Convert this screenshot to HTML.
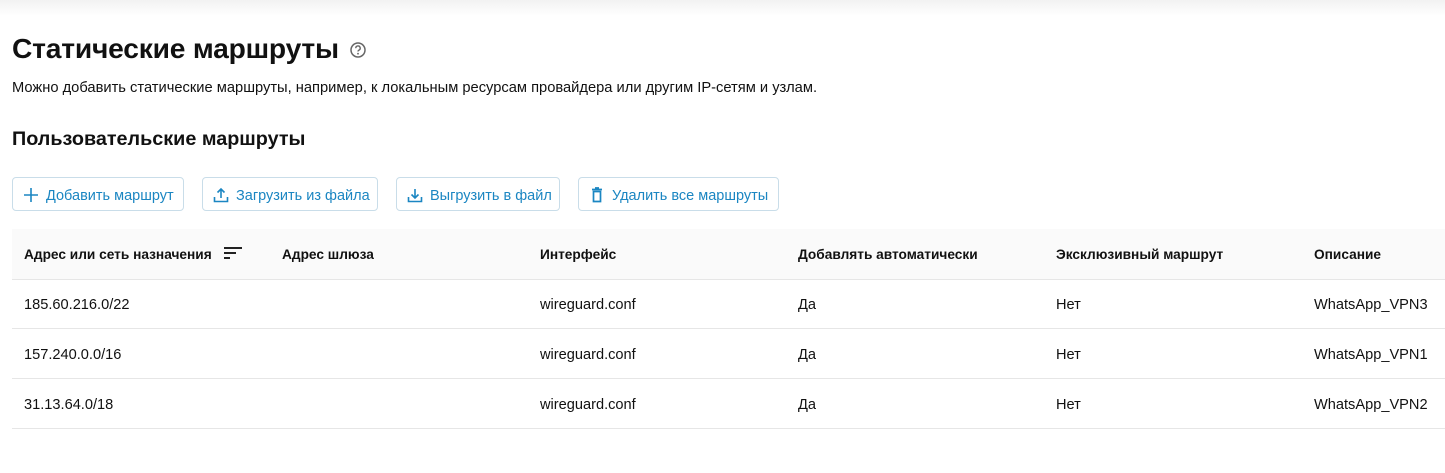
<!DOCTYPE html>
<html><head><meta charset="utf-8"><style>
body{margin:0;width:1445px;height:473px;background:#fff;font-family:"Liberation Sans",sans-serif;color:#111;position:relative;overflow:hidden}
.top{position:absolute;left:0;top:0;width:1445px;height:16px;background:linear-gradient(#f2f2f2,#fff)}
.a{position:absolute;white-space:nowrap}
h1{position:absolute;left:12px;top:32px;margin:0;font-size:28.2px;font-weight:bold;letter-spacing:-0.2px}
.btn{position:absolute;top:177px;height:32px;border:1px solid #c9dde9;border-radius:4px;color:#1b86c2;font-size:14.5px;line-height:36px;box-sizing:content-box;white-space:nowrap}
.btn svg{position:absolute;left:10px;top:9px}
.btn span{position:absolute;left:33px}
.th{position:absolute;left:12px;top:229px;width:1433px;height:50px;background:#fafafa;border-bottom:1px solid #e6e6e6}
.row{position:absolute;left:12px;width:1433px;height:49px;border-bottom:1px solid #e6e6e6}
.c{position:absolute;font-size:14.6px;top:0;line-height:52px;white-space:nowrap}
.hd{font-weight:bold;font-size:13.7px}
</style></head><body>
<div class="top"></div>
<h1>Статические маршруты</h1>
<svg class="a" style="left:349px;top:41px" width="18" height="18" viewBox="0 0 18 18"><circle cx="9" cy="9" r="7" fill="none" stroke="#666" stroke-width="1.5"/><path d="M6.8 7.2a2.2 2.2 0 1 1 3 2c-.6.3-.8.7-.8 1.3" fill="none" stroke="#666" stroke-width="1.4"/><circle cx="9" cy="12.7" r=".9" fill="#666"/></svg>
<div class="a" style="left:12px;top:80px;font-size:14.7px">Можно добавить статические маршруты, например, к локальным ресурсам провайдера или другим IP-сетям и узлам.</div>
<div class="a" style="left:12px;top:128px;font-size:19.8px;font-weight:bold">Пользовательские маршруты</div>

<div class="btn" style="left:12px;width:170px"><svg width="16" height="16" viewBox="0 0 16 16"><path d="M8 1v14M1 8h14" stroke="#1b86c2" stroke-width="1.6"/></svg><span>Добавить маршрут</span></div>
<div class="btn" style="left:202px;width:174px"><svg width="16" height="16" viewBox="0 0 16 16"><path d="M8 11V2M4.5 5.5L8 2l3.5 3.5M1.5 10v4.5h13V10" fill="none" stroke="#1b86c2" stroke-width="1.6"/></svg><span>Загрузить из файла</span></div>
<div class="btn" style="left:396px;width:162px"><svg width="16" height="16" viewBox="0 0 16 16"><path d="M8 2v9M4.5 7.5L8 11l3.5-3.5M1.5 10v4.5h13V10" fill="none" stroke="#1b86c2" stroke-width="1.6"/></svg><span>Выгрузить в файл</span></div>
<div class="btn" style="left:578px;width:199px"><svg width="16" height="16" viewBox="0 0 16 16"><path d="M3 2.5h10M6 1h4M4.5 4.5h7v10h-7z" fill="none" stroke="#1b86c2" stroke-width="1.7"/></svg><span>Удалить все маршруты</span></div>

<div class="th">
<div class="c hd" style="left:12px">Адрес или сеть назначения</div>
<svg class="a" style="left:212px;top:18px" width="18" height="12" viewBox="0 0 18 12"><path d="M0 1h18M0 6h12M0 11h6" stroke="#222" stroke-width="2"/></svg>
<div class="c hd" style="left:270px">Адрес шлюза</div>
<div class="c hd" style="left:528px">Интерфейс</div>
<div class="c hd" style="left:786px">Добавлять автоматически</div>
<div class="c hd" style="left:1044px">Эксклюзивный маршрут</div>
<div class="c hd" style="left:1302px">Описание</div>
</div>
<div class="row" style="top:279px"><div class="c" style="left:12px">185.60.216.0/22</div><div class="c" style="left:528px">wireguard.conf</div><div class="c" style="left:786px">Да</div><div class="c" style="left:1044px">Нет</div><div class="c" style="left:1302px">WhatsApp_VPN3</div></div>
<div class="row" style="top:329px"><div class="c" style="left:12px">157.240.0.0/16</div><div class="c" style="left:528px">wireguard.conf</div><div class="c" style="left:786px">Да</div><div class="c" style="left:1044px">Нет</div><div class="c" style="left:1302px">WhatsApp_VPN1</div></div>
<div class="row" style="top:379px"><div class="c" style="left:12px">31.13.64.0/18</div><div class="c" style="left:528px">wireguard.conf</div><div class="c" style="left:786px">Да</div><div class="c" style="left:1044px">Нет</div><div class="c" style="left:1302px">WhatsApp_VPN2</div></div>
</body></html>
